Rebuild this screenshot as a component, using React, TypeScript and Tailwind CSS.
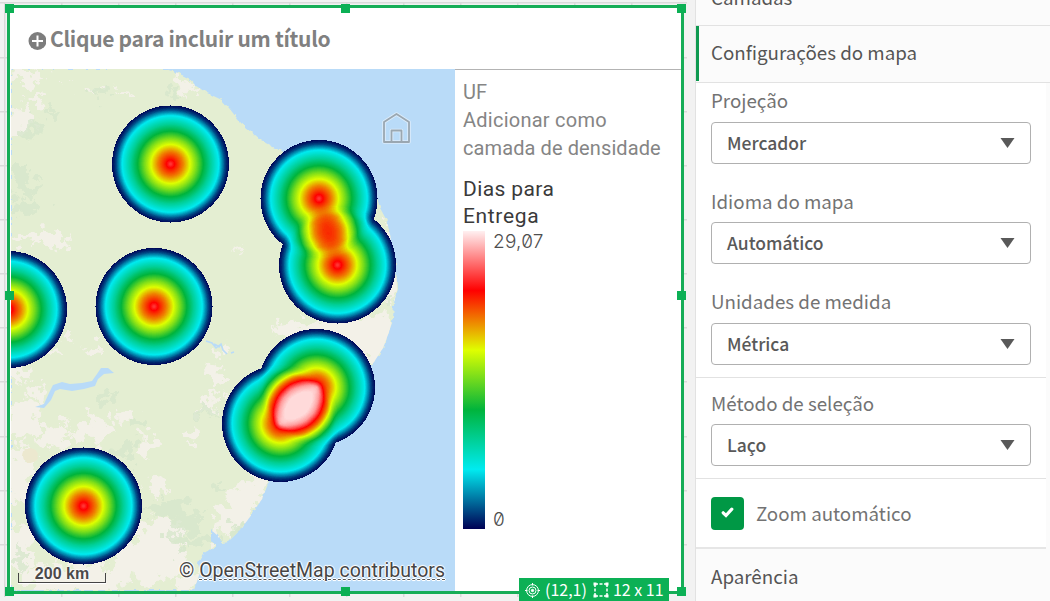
import React from "react";

const LAND =
  "M11 69H167L178 73L190 79L196 86L207 93L222 100L229 108L240 122L251 131L262 141L275 148L300 158L340 170L375 190L380 208L387 221L391 240L396 265L397 290L394 303L393 318L389 332L383 348L374 362L340 400L300 450L276 472L268 484L262 499L256 508L247 521L238 532L228 542L222 543L217 535L211 530L211 541L216 545L209 551L201 556L198 563L200 572L194 590H11Z";

const RIVER =
  "M35 407L44 404L49 393L53 385L62 382L70 384L82 383L92 381L97 374L101 368L108 368L114 373L104 374L98 379L95 386L84 389L72 391L60 389L55 391L51 400L44 408Z";

const SPOTS: [number, number][] = [
  [170.5, 164],
  [319, 198.5],
  [337.5, 265],
  [154, 306.5],
  [8.5, 309.5],
  [83.5, 506],
  [316.5, 387.5],
  [280.5, 423.5],
];

const SAND: [number, number, number, number][] = [
  [20, 76, 24, 6], [36, 100, 13, 5], [20, 122, 12, 13], [182, 82, 8, 8], [196, 88, 9, 4],
  [48, 238, 24, 7], [62, 245, 9, 6], [24, 240, 10, 4], [96, 92, 3, 2], [124, 92, 8, 2], [64, 84, 4, 2],
  [68, 340, 7, 4], [92, 352, 5, 7], [50, 352, 13, 4], [17, 372, 9, 17], [34, 392, 10, 6],
  [24, 420, 16, 20], [55, 436, 16, 12], [90, 430, 20, 12], [128, 415, 12, 7], [148, 445, 10, 9],
  [20, 475, 14, 30], [20, 550, 14, 26], [75, 578, 55, 16], [150, 560, 38, 22], [158, 530, 22, 12],
  [158, 486, 12, 8], [190, 435, 8, 7], [217, 375, 7, 12], [215, 398, 5, 9], [220, 352, 5, 8],
  [330, 325, 40, 6], [360, 335, 38, 16], [380, 340, 22, 26], [300, 330, 28, 5], [392, 290, 8, 18],
  [386, 235, 5, 12], [240, 505, 16, 20], [254, 488, 10, 13], [226, 520, 12, 16], [222, 548, 12, 6],
  [190, 580, 14, 12], [236, 248, 6, 1.5], [206, 408, 8, 7],
];

const FOREST: [number, number, number, number][] = [
  [24, 180, 13, 13], [26, 206, 16, 8], [32, 128, 6, 8], [100, 96, 6, 6], [175, 96, 7, 4],
  [52, 112, 8, 3], [108, 395, 8, 4], [20, 560, 5, 15], [126, 450, 8, 12], [168, 508, 20, 9],
  [188, 522, 18, 8], [205, 540, 16, 6], [242, 530, 10, 8], [205, 412, 8, 5], [390, 302, 5, 6],
  [180, 540, 12, 9], [222, 487, 5, 4], [140, 425, 8, 6],
];

function interpolate(points: [number, number][], x: number) {
  for (let i = 1; i < points.length; i++) {
    const [x0, y0] = points[i - 1];
    const [x1, y1] = points[i];
    if (x <= x1) return y0 + ((y1 - y0) * (x - x0)) / (x1 - x0);
  }
  return points[points.length - 1][1];
}

// Summed density to position on the colour scale.
const DENSITY_TO_SCALE: [number, number][] = [
  [0, 0], [0.015, 0.03], [0.055, 0.09], [0.15, 0.2], [0.3, 0.3], [0.415, 0.4],
  [0.515, 0.5], [0.61, 0.6], [0.7, 0.7], [0.79, 0.78], [0.84, 0.84], [0.92, 0.93], [1, 0.98],
];

function channelTable(values: number[]) {
  const scale = values.map((v, i): [number, number] => [i / 5, v]);
  return Array.from({ length: 256 }, (_, i) =>
    interpolate(scale, interpolate(DENSITY_TO_SCALE, i / 255)).toFixed(3),
  ).join(" ");
}

const RED = channelTable([0, 0, 0, 0.875, 1, 1]);
const GREEN = channelTable([0, 0.92, 0.706, 1, 0, 0.95]);
const BLUE = channelTable([0.33, 0.94, 0.235, 0, 0, 0.95]);

// Distance from a point's centre (0..1) to its density.
const KERNEL: [number, number][] = [
  [0, 0.85], [0.08, 0.8], [0.2, 0.71], [0.32, 0.62], [0.44, 0.525], [0.56, 0.415], [0.63, 0.35],
  [0.7, 0.28], [0.77, 0.205], [0.83, 0.145], [0.88, 0.085], [0.92, 0.042], [0.96, 0.016], [0.985, 0.008], [1, 0.004],
];

function MapDrawing() {
  return (
    <svg className="absolute inset-0" width="444" height="522" viewBox="11 69 444 522">
      <defs>
        <filter id="rough" x="0" y="60" width="460" height="540" filterUnits="userSpaceOnUse">
          <feTurbulence type="fractalNoise" baseFrequency="0.085" numOctaves="4" seed="8" />
          <feDisplacementMap in="SourceGraphic" scale="34" xChannelSelector="R" yChannelSelector="G" />
          <feGaussianBlur stdDeviation="0.6" />
        </filter>
        <filter id="coast" x="0" y="60" width="460" height="540" filterUnits="userSpaceOnUse">
          <feTurbulence type="fractalNoise" baseFrequency="0.18" numOctaves="2" seed="3" />
          <feDisplacementMap in="SourceGraphic" scale="5" xChannelSelector="R" yChannelSelector="G" />
          <feGaussianBlur stdDeviation="0.4" />
        </filter>
        <radialGradient id="kernel">
          {KERNEL.map(([distance, density]) => (
            <stop key={distance} offset={distance} stopColor="#fff" stopOpacity={density} />
          ))}
        </radialGradient>
        <filter id="ramp" x="-60" y="60" width="520" height="540" filterUnits="userSpaceOnUse" colorInterpolationFilters="sRGB">
          <feColorMatrix values="0 0 0 1 0  0 0 0 1 0  0 0 0 1 0  0 0 0 255 0" />
          <feComponentTransfer>
            <feFuncR type="table" tableValues={RED} />
            <feFuncG type="table" tableValues={GREEN} />
            <feFuncB type="table" tableValues={BLUE} />
          </feComponentTransfer>
          <feGaussianBlur stdDeviation="0.6" />
        </filter>
        <clipPath id="land">
          <path d={LAND} />
        </clipPath>
      </defs>
      <rect x="11" y="69" width="444" height="522" fill="#b9dbf8" />
      <path d={LAND} fill="#e4eed2" filter="url(#coast)" />
      <g clipPath="url(#land)">
        <g filter="url(#rough)" fill="#f3f1e8">
          {SAND.map(([x, y, rx, ry], i) => (
            <ellipse key={i} cx={x} cy={y} rx={rx} ry={ry} />
          ))}
        </g>
        <g filter="url(#rough)" fill="#d6e6cb" opacity="0.75">
          {FOREST.map(([x, y, rx, ry], i) => (
            <ellipse key={i} cx={x} cy={y} rx={rx} ry={ry} />
          ))}
        </g>
        <ellipse cx="30" cy="456" rx="8" ry="8" fill="#ece8cf" filter="url(#coast)" />
      </g>
      <path d={RIVER} fill="#b9dbf8" />
      <path
        d="M206 341L212 343L216 348L221 344L223 350L227 354M214 344L220 347M231 353L234 352"
        fill="none"
        stroke="#b9dbf8"
        strokeWidth="1.6"
      />
      <g filter="url(#ramp)">
        {SPOTS.map(([x, y], i) => (
          <circle key={i} cx={x} cy={y} r="58.5" fill="url(#kernel)" className="mix-blend-plus-lighter" />
        ))}
      </g>
      <g fill="none" strokeLinejoin="round">
        <g stroke="#dcecfa" strokeWidth="3.6">
          <path d="M384 122L396.500 114L409 122V142H384Z" />
          <path d="M391.500 142V130.500H401.500V142" />
        </g>
        <g stroke="#9aa7b1" strokeWidth="1.8">
          <path d="M384 122L396.500 114L409 122V142H384Z" />
          <path d="M391.500 142V130.500H401.500V142" />
        </g>
      </g>
    </svg>
  );
}

function CanvasGrid() {
  return (
    <svg className="absolute inset-0" width="695" height="601" viewBox="0 0 695 601">
      <g fill="#dadada">
        {Array.from({ length: 12 }, (_, i) => (
          <rect key={i} x={4 + i * 57} y="2" width="1.500" height="595" />
        ))}
        <rect x="0" y="2" width="687" height="1.500" />
        {Array.from({ length: 10 }, (_, i) => (
          <rect key={i} x="0" y={Math.round(56.500 + i * 54.150)} width="687" height="1.500" />
        ))}
      </g>
    </svg>
  );
}

function Handle({ place }: { place: string }) {
  return <span className={`absolute size-[9px] bg-[#0cb055] ${place}`} />;
}

function Legend() {
  return (
    <div className="flex h-[522px] w-[226px] flex-col border-t border-[#b3b3b3] pl-2 font-[Roboto,sans-serif]">
      <div className="mt-[8px] text-[20px] leading-[28px] text-[#858585]">
        <p className="whitespace-nowrap">UF</p>
        <p className="whitespace-nowrap tracking-[0.25px]">Adicionar como</p>
        <p className="whitespace-nowrap tracking-[0.1px]">camada de densidade</p>
      </div>
      <div className="mt-[14px] text-[21px] leading-[27px] text-[#3a3a3a]">
        <p className="whitespace-nowrap tracking-[0.4px]">Dias para</p>
        <p className="whitespace-nowrap tracking-[0.65px]">Entrega</p>
      </div>
      <div className="mt-[1px] flex h-[298px] gap-2">
        <div className="w-[22px] bg-[linear-gradient(to_bottom,#fff0f1,#ff0000_20%,#dfff00_40%,#00b43c_60%,#00ebf0_80%,#000054)]" />
        <div className="flex flex-col justify-between pt-px font-[Inter,sans-serif] text-[19px] font-light leading-[20px] text-[#4f4f4f] [font-feature-settings:'zero']">
          <span className="tracking-[0.25px]">29,07</span>
          <span className="-mb-px">0</span>
        </div>
      </div>
    </div>
  );
}

function MapCard() {
  return (
    <div className="relative h-[589px] w-[677px] border-[3px] border-[#16ad57] bg-white pl-px">
      <div className="flex h-[61px] items-center pl-[17px] pt-[3px]">
        <svg width="18" height="18" viewBox="0 0 18 18" className="mt-px">
          <circle cx="9.500" cy="9" r="9" fill="#7d7d7d" />
          <path d="M9.500 3.500V14.500M4 9H15" stroke="#fff" strokeWidth="2" />
        </svg>
        <span className="-mt-[4px] ml-[4px] whitespace-nowrap font-['Noto_Sans_CJK_JP',sans-serif] text-[21px] font-bold leading-[30px] -tracking-[0.29px] text-[#808080]">
          Clique para incluir um título
        </span>
      </div>
      <div className="flex h-[522px]">
        <div className="relative h-[522px] w-[444px] shrink-0 overflow-hidden">
          <MapDrawing />
          <div className="absolute inset-x-0 bottom-0 flex h-[36px] justify-between">
            <div className="ml-[7px] mt-[9px] flex w-[88px] flex-col items-center">
              <span className="mt-px font-['Liberation_Sans',sans-serif] text-[16px] font-bold leading-[18px] text-[#4a4a4a] [text-shadow:0_0_2px_#fff,0_0_2px_#fff,0_0_2px_#fff]">
                200 km
              </span>
              <span className="-mt-[10px] h-[10px] w-full border-x border-b border-[#444] shadow-[0_1px_1px_#fff]" />
            </div>
            <div className="mr-[10px] mt-[4px] whitespace-nowrap font-[Roboto,sans-serif] text-[19.500px] leading-[24px] text-[#454545] [text-shadow:1px_0_1px_#fff,-1px_0_1px_#fff,0_1px_1px_#fff,0_-1px_1px_#fff,0_0_2px_#fff]">
              ©{" "}
              <span className="underline decoration-[#555] decoration-dashed decoration-1 underline-offset-2">
                OpenStreetMap contributors
              </span>
            </div>
          </div>
        </div>
        <Legend />
      </div>
      <Handle place="-left-[5px] -top-[4px]" />
      <Handle place="left-[331px] -top-[4px]" />
      <Handle place="-right-[5px] -top-[4px]" />
      <Handle place="-left-[5px] top-[283px]" />
      <Handle place="-right-[5px] top-[283px]" />
      <Handle place="-left-[5px] -bottom-[5px]" />
      <Handle place="left-[331px] -bottom-[5px]" />
      <Handle place="-right-[5px] -bottom-[5px]" />
      <div className="absolute left-[509px] top-[570px] flex h-[23px] w-[150px] items-center bg-[#0cb055] pl-[6px] font-['Noto_Sans_CJK_JP',sans-serif] text-[16px] leading-[22px] text-white">
        <svg width="15" height="15" viewBox="0 0 15 15" fill="none" stroke="#fff" className="mt-px">
          <circle cx="7.500" cy="7.500" r="5.900" />
          <circle cx="7.500" cy="7.500" r="3.500" />
          <circle cx="7.500" cy="7.500" r="1.200" fill="#fff" />
          <path d="M7.500 0V2.500M7.500 12.500V15M0 7.500H2.500M12.500 7.500H15" />
        </svg>
        <span className="-mt-px ml-[5px] whitespace-nowrap">(12,1)</span>
        <svg className="ml-[6px] mt-px" width="16" height="16" viewBox="0 0 16 16">
          <path
            d="M2 2H14M2 14H14M2 2V14M14 2V14"
            fill="none"
            stroke="#fff"
            strokeWidth="1.500"
            strokeDasharray="3 1.500"
          />
          <path d="M0.500 0.500h3v3h-3zM12.500 0.500h3v3h-3zM0.500 12.500h3v3h-3zM12.500 12.500h3v3h-3z" fill="#fff" />
        </svg>
        <span className="-mt-px ml-[4px] whitespace-nowrap">12 x 11</span>
      </div>
    </div>
  );
}

function SelectField({ label, value, gap, leading = "leading-[26px]" }: { label: string; value: string; gap: string; leading?: string }) {
  return (
    <div className={`flex flex-col ${gap}`}>
      <label className={`h-[28px] whitespace-nowrap text-[18.750px] text-[#737373] ${leading}`}>{label}</label>
      <div className="mt-[7px] flex h-[42px] w-[320px] items-center justify-between rounded-[4px] border border-[#b0b0b0] bg-white pl-[15px] pr-[15px]">
        <span className="text-[17.500px] font-medium leading-[26px] text-[#595959]">{value}</span>
        <svg width="15" height="10" viewBox="0 0 15 10" className="-mt-px">
          <path d="M0.500 0H14.500L7.500 10Z" fill="#595959" />
        </svg>
      </div>
    </div>
  );
}

function PropertiesPanel() {
  return (
    <aside className="flex h-[601px] w-[355px] flex-col overflow-hidden border-l border-[#e2e2e2] bg-[#fbfbfb] font-['Noto_Sans_CJK_JP',sans-serif]">
      <div className="flex h-[26px] items-end border-b border-[#e2e2e2] pl-[15px]">
        <span className="mb-[15px] text-[18.750px] leading-[26px] text-[#555]">Camadas</span>
      </div>
      <div className="flex h-[57px] border-b border-[#e2e2e2]">
        <div className="h-[55px] w-[3px] bg-[#0e9950]" />
        <span className="ml-[12px] mt-[13px] whitespace-nowrap text-[18.750px] leading-[26px] text-[#555]">
          Configurações do mapa
        </span>
      </div>
      <div className="flex h-[466px] w-[350px] flex-col border-b-2 border-[#e6e6e6] bg-white">
        <div className="h-[295px] border-b border-[#e2e2e2] pl-[15px]">
          <SelectField label="Projeção" value="Mercador" gap="pt-[4px]" />
          <SelectField label="Idioma do mapa" value="Automático" gap="pt-[23px]" leading="leading-[28px]" />
          <SelectField label="Unidades de medida" value="Métrica" gap="pt-[24px]" />
        </div>
        <div className="h-[101px] border-b border-[#e2e2e2] pl-[15px]">
          <SelectField label="Método de seleção" value="Laço" gap="pt-[11px]" leading="leading-[28px]" />
        </div>
        <div className="flex items-center pl-[15px] pt-[18px]">
          <span className="flex size-[33px] items-center justify-center rounded-[4px] bg-[#009845]">
            <svg width="13" height="11" viewBox="0 0 13 11" className="-mt-[2px]">
              <path d="M2.200 5.800L5 8.500L10.800 2.200" fill="none" stroke="#fff" strokeWidth="3.200" strokeLinecap="round" />
            </svg>
          </span>
          <span className="-mt-[2px] ml-[12px] whitespace-nowrap text-[18.750px] leading-[28px] text-[#737373]">
            Zoom automático
          </span>
        </div>
      </div>
      <div className="pl-[15px] pt-[13px] text-[18.750px] leading-[28px] text-[#555]">Aparência</div>
    </aside>
  );
}

export default function App() {
  return (
    <div className="flex h-[601px] w-[1050px] overflow-hidden bg-[#f2f2f2]">
      <main className="relative h-[601px] w-[695px] shrink-0 pl-[7px] pt-[5px]">
        <CanvasGrid />
        <MapCard />
      </main>
      <PropertiesPanel />
    </div>
  );
}
